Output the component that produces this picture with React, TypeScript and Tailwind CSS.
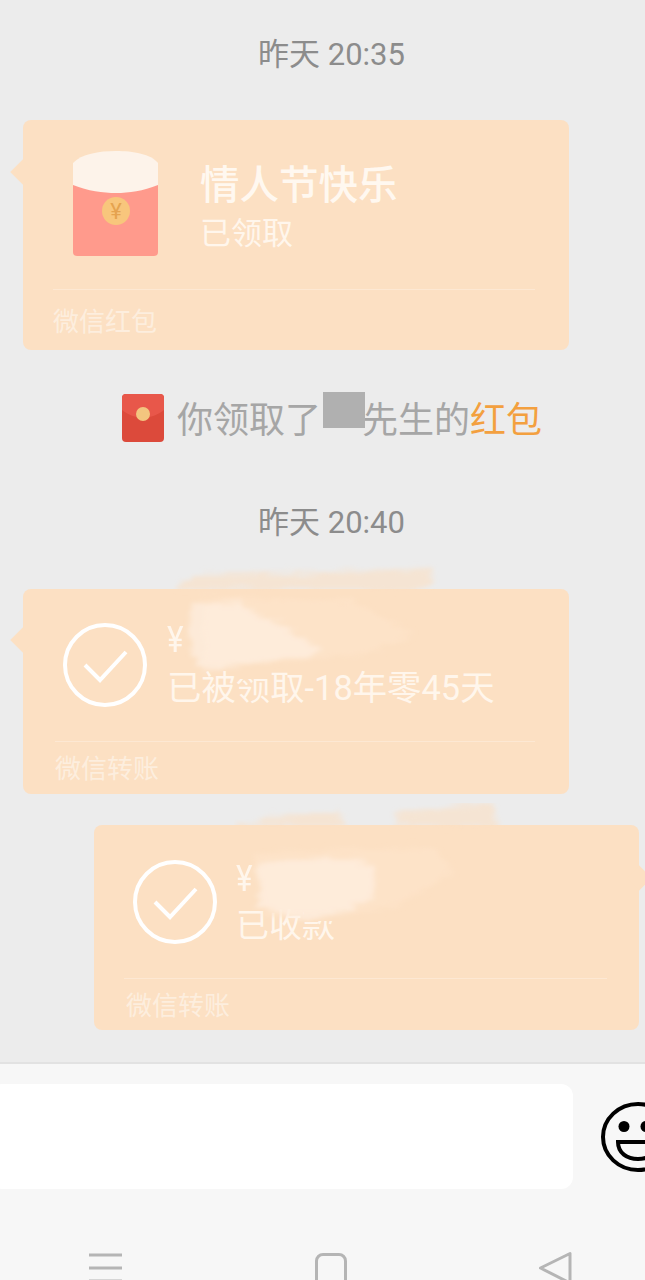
const font = { fontFamily: '"Roboto", "Noto Sans CJK SC", sans-serif' };

function TimeLabel({ text, className }: { text: string; className: string }) {
  return (
    <div className={`h-[40px] pl-[18px] pt-[2px] flex items-center justify-center text-[31px] leading-none text-[#8c8c8c] ${className}`}>
      {text}
    </div>
  );
}

function RedPacket() {
  return (
    <svg width="86" height="106" viewBox="0 0 86 106" className="shrink-0">
      <path d="M0 20H85V101a4 4 0 0 1-4 4H4a4 4 0 0 1-4-4Z" fill="#ff9a8c" />
      <path d="M0 12C8 3 26 0 43 0s35 3 42 12V34C70 40 56 42 43 42S15 40 0 34Z" fill="#fdf3ea" />
      <circle cx="43" cy="60" r="14" fill="#f8c67c" />
      <text x="43" y="68" textAnchor="middle" fontSize="22" fill="#e5a34f" fontFamily="Roboto, sans-serif">¥</text>
    </svg>
  );
}

function CheckCircle() {
  return (
    <svg width="86" height="86" viewBox="0 0 86 86" className="shrink-0">
      <circle cx="43" cy="43" r="40" fill="none" stroke="#fff" strokeWidth="4" />
      <path d="M23 43L38 58L64 30" fill="none" stroke="#fff" strokeWidth="4" />
    </svg>
  );
}

// brush marks that hide the amount in the transfer cards
function Smudge({ id, fringe, cover, white, faint, className }: { id: string; fringe: string[]; cover: string; white: string[]; faint: string[]; className: string }) {
  return (
    <svg width="340" height="150" viewBox="0 0 340 150" className={`absolute pointer-events-none ${className}`}>
      <defs>
        <filter id={id} x="-20%" y="-20%" width="140%" height="140%">
          <feTurbulence type="fractalNoise" baseFrequency="0.02 0.5" numOctaves="3" seed="4" result="noise" />
          <feDisplacementMap in="SourceGraphic" in2="noise" scale="18" xChannelSelector="R" yChannelSelector="G" />
          <feGaussianBlur stdDeviation="2" />
        </filter>
      </defs>
      <path d={cover} fill="#fce0c3" />
      <g filter={`url(#${id})`}>
        {fringe.map((d) => (
          <path key={d} d={d} fill="#fce0c3" opacity="0.6" />
        ))}
        {faint.map((d) => (
          <path key={d} d={d} fill="#fde4cb" opacity="0.7" />
        ))}
        {white.map((d) => (
          <path key={d} d={d} fill="#fef0e4" opacity="0.65" />
        ))}
      </g>
    </svg>
  );
}

export default function App() {
  return (
    <div className="w-[645px] h-[1280px] overflow-hidden bg-[#ececec] flex flex-col" style={font}>
      <div className="h-[1062px] shrink-0 flex flex-col">
        <TimeLabel text="昨天 20:35" className="mt-[33px]" />

        <div className="relative mt-[47px] ml-[23px] w-[546px] h-[230px] bg-[#fce0c3] rounded-lg flex flex-col">
          <div className="absolute left-[-9px] top-[43px] w-[18px] h-[18px] rotate-45 bg-[#fce0c3]" />
          <div className="relative h-[169px] pl-[50px] pt-[31px] flex">
            <RedPacket />
            <div className="ml-[41px] flex flex-col">
              <div className="mt-[12px] h-[46px] flex items-center text-[39.5px] font-medium leading-none text-[#fff8f0]">情人节快乐</div>
              <div className="h-[48px] flex items-center text-[31px] leading-none text-[#fff6ec]">已领取</div>
            </div>
          </div>
          <div className="ml-[30px] w-[482px] h-px bg-[#fde8d3]" />
          <div className="pl-[30px] pt-[3px] h-[60px] flex items-center text-[26px] leading-none text-[#fdeede]">微信红包</div>
        </div>

        <div className="mt-[44px] h-[48px] pl-[122px] flex items-center">
          <svg width="42" height="48" viewBox="0 0 42 48" className="shrink-0">
            <rect width="42" height="48" rx="4" fill="#dc4a3b" />
            <path d="M0 4a4 4 0 0 1 4-4H38a4 4 0 0 1 4 4V16C30 26 12 26 0 16Z" fill="#e8574a" />
            <circle cx="21" cy="20" r="7" fill="#f3c57f" />
          </svg>
          <div className="ml-[13px] mt-[5px] flex items-center text-[36px] leading-none text-[#a6a6a6]">
            <span>你领取了</span>
            <span className="ml-[2px] -mr-[3px] w-[42px] h-[36px] bg-[#b0b0b0] -translate-y-[11px]" />
            <span>先生的</span>
            <span className="text-[#f3a03f]">红包</span>
          </div>
        </div>

        <TimeLabel text="昨天 20:40" className="mt-[59px]" />

        <div className="relative mt-[48px] ml-[23px] w-[546px] h-[205px] bg-[#fce0c3] rounded-lg flex flex-col">
          <div className="absolute left-[-9px] top-[42px] w-[18px] h-[18px] rotate-45 bg-[#fce0c3]" />
          <div className="h-[152px] pl-[39px] pt-[33px] flex">
            <CheckCircle />
            <div className="ml-[19px] flex flex-col">
              <div className="h-[30px] mt-[2px] flex items-center text-[37px] leading-none text-[#fff6ec] scale-x-[0.85] origin-left">¥</div>
              <div className="mt-[12px] h-[44px] flex items-center text-[34.4px] leading-none text-[#fff6ec] whitespace-nowrap">已被领取-18年零45天</div>
            </div>
          </div>
          <div className="ml-[32px] w-[480px] h-px bg-[#fde8d3]" />
          <div className="pl-[32px] pt-[2px] h-[52px] flex items-center text-[26px] leading-none text-[#fdeede]">微信转账</div>
          <Smudge
            id="smudge-a"
            className="left-[150px] top-[-28px]"
            cover="M62 106H98V118H62Z"
            fringe={["M2 28L20 14L130 12L258 6L258 26L200 30Z"]}
            faint={["M30 36L180 40L240 74L180 96L30 106Z"]}
            white={["M18 42L68 42L128 78L150 90L80 104L30 110L16 88Z"]}
          />
        </div>

        <div className="relative mt-[31px] ml-[94px] w-[545px] h-[205px] bg-[#fce0c3] rounded-lg flex flex-col">
          <div className="absolute right-[-9px] top-[44px] w-[18px] h-[18px] rotate-45 bg-[#fce0c3]" />
          <div className="h-[153px] pl-[38px] pt-[34px] flex">
            <CheckCircle />
            <div className="ml-[18px] flex flex-col">
              <div className="h-[34px] mt-[2px] flex items-center text-[37px] leading-none text-[#fff6ec] scale-x-[0.85] origin-left">¥</div>
              <div className="mt-[11px] h-[38px] flex items-center text-[33px] leading-none text-[#fff6ec] whitespace-nowrap">已收款</div>
            </div>
          </div>
          <div className="ml-[30px] w-[483px] h-px bg-[#fde8d3]" />
          <div className="pl-[32px] pt-[3px] h-[51px] flex items-center text-[26px] leading-none text-[#fdeede]">微信转账</div>
          <Smudge
            id="smudge-b"
            className="left-[140px] top-[-22px]"
            cover="M70 104H106V118H70Z"
            fringe={["M0 24L30 14L106 10L112 24Z", "M160 10L258 0L262 24L160 24Z"]}
            faint={["M20 50L200 44L220 70L160 104L30 116Z"]}
            white={["M24 60L90 54L140 62L140 96L100 112L72 118L24 104Z"]}
          />
        </div>
      </div>

      <div className="flex-1 bg-[#f7f7f7] border-t-2 border-[#e2e2e2] flex flex-col">
        <div className="mt-[20px] h-[105px] flex items-center shrink-0">
          <div className="-ml-[10px] w-[583px] h-[105px] shrink-0 bg-white rounded-xl" />
          <svg width="80" height="72" viewBox="0 0 80 72" className="ml-[27px] shrink-0">
            <ellipse cx="38" cy="36" rx="35" ry="33" fill="none" stroke="#000" strokeWidth="4" />
            <circle cx="24" cy="25.5" r="5.5" />
            <circle cx="46" cy="25.5" r="5.5" />
            <path d="M18 41H58C58 52 49 58 38 58S18 52 18 41Z" fill="none" stroke="#000" strokeWidth="4" />
          </svg>
        </div>
        <div className="mt-[64px] pl-[89px] flex items-start shrink-0">
          <svg width="33" height="30" viewBox="0 0 33 30" className="shrink-0">
            <path d="M0 2H33M0 15H33M0 28H33" stroke="#b5b5b5" strokeWidth="3" />
          </svg>
          <div className="ml-[193px] w-[32px] h-[40px] border-[3px] border-[#b5b5b5] rounded-lg shrink-0" />
          <svg width="36" height="40" viewBox="0 0 36 40" className="ml-[191px] shrink-0 -mt-[3px]">
            <path d="M32 3.5V33L2.5 18Z" fill="none" stroke="#b5b5b5" strokeWidth="3" strokeLinejoin="round" />
          </svg>
        </div>
      </div>
    </div>
  );
}
